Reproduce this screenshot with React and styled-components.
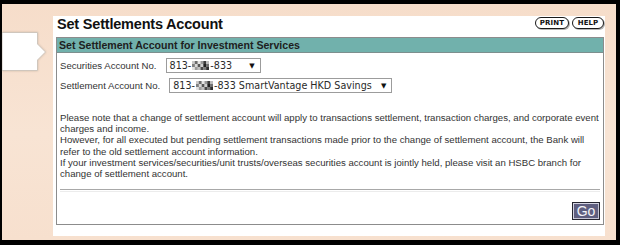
import React from "react";
import styled, { createGlobalStyle } from "styled-components";

const Global = createGlobalStyle`
  html, body { margin: 0; padding: 0; background: #000; }
  body { width: 620px; height: 245px; overflow: hidden; font-family: "Liberation Sans", Arial, sans-serif; }
`;

const Frame = styled.div`
  width: 620px;
  height: 245px;
  box-sizing: border-box;
  padding: 4px 4px 5px 2px;
  background: #000;
`;

const Canvas = styled.div`
  height: 100%;
  display: flex;
  background: linear-gradient(180deg, #f6ddca 0%, #f8e4d4 55%, #f7e0ce 100%);
`;

const Gutter = styled.div`
  width: 51px;
  flex: none;
  padding-top: 28px;
  svg { display: block; filter: drop-shadow(0 0 1px rgba(120, 100, 80, 0.3)); }
`;

const Panel = styled.div`
  width: 552px;
  margin: 12px 0 4px;
  box-sizing: border-box;
  padding: 0 1px 0 3px;
  background: #fff;
  display: flex;
  flex-direction: column;
`;

const TitleRow = styled.div`
  height: 21px;
  display: flex;
  justify-content: space-between;
  align-items: flex-start;
  padding: 0 0 0 1px;
`;

const Title = styled.h1`
  margin: 0;
  font-size: 14.5px;
  line-height: 16px;
  letter-spacing: -0.2px;
  font-weight: bold;
  color: #111;
`;

const Pills = styled.div`
  display: flex;
  gap: 3px;
  margin-top: 1px;
`;

const Pill = styled.span`
  width: ${(p) => p.$w}px;
  height: 12px;
  box-sizing: border-box;
  border: 1.4px solid #1a1a1a;
  border-radius: 7px;
  background: #fff;
  box-shadow: 1px 1px 0 #b4b4b4;
  display: flex;
  align-items: center;
  justify-content: center;
  font-family: "DejaVu Sans", Verdana, sans-serif;
  font-weight: bold;
  font-size: 7px;
  letter-spacing: 0.1px;
  color: #111;
`;

const Box = styled.div`
  border: 1px solid #8c8c8c;
  display: flex;
  flex-direction: column;
`;

const Header = styled.div`
  height: 14px;
  border-bottom: 1px solid #7d8f8e;
  background: #71b1ac;
  padding-left: 2px;
  font-size: 10.6px;
  line-height: 14px;
  font-weight: bold;
  color: #1e1e1e;
  white-space: nowrap;
`;

const Body = styled.div`
  padding: 0 3px 4px 3px;
  display: flex;
  flex-direction: column;
`;

const Row = styled.div`
  display: flex;
  align-items: center;
  gap: 9px;
  margin-top: ${(p) => p.$top}px;
  height: 15px;
`;

const Label = styled.span`
  font-size: 9.6px;
  color: #333;
  white-space: nowrap;
`;

const Select = styled.div`
  width: ${(p) => p.$w}px;
  height: 15px;
  box-sizing: border-box;
  border: 1px solid #9c9c9c;
  background: #fff;
  display: flex;
  align-items: center;
  justify-content: space-between;
  padding: 0 5px 0 3px;
  font-family: "DejaVu Sans", Verdana, sans-serif;
  font-size: 9.6px;
  color: #2a2a2a;
  white-space: nowrap;
`;

const Value = styled.span`
  display: flex;
  align-items: center;
`;

const Arrow = styled.span`
  font-size: 7px;
  color: #111;
`;

const Notes = styled.div`
  margin-top: 19px;
  font-size: 9.6px;
  line-height: 11.2px;
  color: #333;
  white-space: nowrap;
`;

const Divider = styled.div`
  margin-top: 10px;
  height: 1px;
  border-top: 1px solid #a8a8a8;
  border-bottom: 1px solid #ececec;
`;

const Footer = styled.div`
  display: flex;
  justify-content: flex-end;
  padding-top: 10px;
`;

const GoButton = styled.button`
  width: 28px;
  height: 18px;
  padding: 0;
  box-sizing: border-box;
  border: 1px solid #25252f;
  background: #5f5f80;
  box-shadow: inset 1px 1px 0 #d4d4e2, inset -1px -1px 0 #c4c4d4;
  color: #f4f4f8;
  font-family: "Liberation Sans", Arial, sans-serif;
  font-size: 14px;
  line-height: 16px;
`;

const mosaic = [
  ["#c9c9c9", "#6a6a6a", "#e4e4e4", "#9a9a9a", "#3d3d3d", "#bdbdbd"],
  ["#808080", "#d8d8d8", "#555", "#cfcfcf", "#202020", "#707070"],
  ["#e2e2e2", "#9c9c9c", "#bfbfbf", "#4a4a4a", "#7c7c7c", "#2e2e2e"],
];

function Redacted({ w = 17 }) {
  const cw = w / 6;
  return (
    <svg width={w} height={9} viewBox={`0 0 ${w} 9`} style={{ margin: "0 1px" }}>
      {mosaic.map((row, r) =>
        row.map((c, i) => <rect key={`${r}-${i}`} x={i * cw} y={r * 3} width={cw + 0.2} height={3.2} fill={c} />)
      )}
    </svg>
  );
}

function Tab() {
  return (
    <svg width="46" height="40" viewBox="0 0 46 40">
      <polygon points="0,0.5 35.5,0.5 35.5,12 43.5,20 35.5,28 35.5,38.5 0,38.5" fill="#fff" stroke="#cfc6bd" strokeWidth="1" />
    </svg>
  );
}

export default function App() {
  return (
    <>
      <Global />
      <Frame>
        <Canvas>
          <Gutter>
            <Tab />
          </Gutter>
          <Panel>
            <TitleRow>
              <Title>Set Settlements Account</Title>
              <Pills>
                <Pill $w={34}>PRINT</Pill>
                <Pill $w={32}>HELP</Pill>
              </Pills>
            </TitleRow>
            <Box>
              <Header>Set Settlement Account for Investment Services</Header>
              <Body>
                <Row $top={5}>
                  <Label>Securities Account No.</Label>
                  <Select $w={95}>
                    <Value>813-<Redacted />-833</Value>
                    <Arrow>▼</Arrow>
                  </Select>
                </Row>
                <Row $top={5}>
                  <Label>Settlement Account No.</Label>
                  <Select $w={223}>
                    <Value>813-<Redacted />-833 SmartVantage HKD Savings</Value>
                    <Arrow>▼</Arrow>
                  </Select>
                </Row>
                <Notes>
                  Please note that a change of settlement account will apply to transactions settlement, transaction charges, and corporate event
                  <br />
                  charges and income.
                  <br />
                  However, for all executed but pending settlement transactions made prior to the change of settlement account, the Bank will
                  <br />
                  refer to the old settlement account information.
                  <br />
                  If your investment services/securities/unit trusts/overseas securities account is jointly held, please visit an HSBC branch for
                  <br />
                  change of settlement account.
                </Notes>
                <Divider />
                <Footer>
                  <GoButton>Go</GoButton>
                </Footer>
              </Body>
            </Box>
          </Panel>
        </Canvas>
      </Frame>
    </>
  );
}
